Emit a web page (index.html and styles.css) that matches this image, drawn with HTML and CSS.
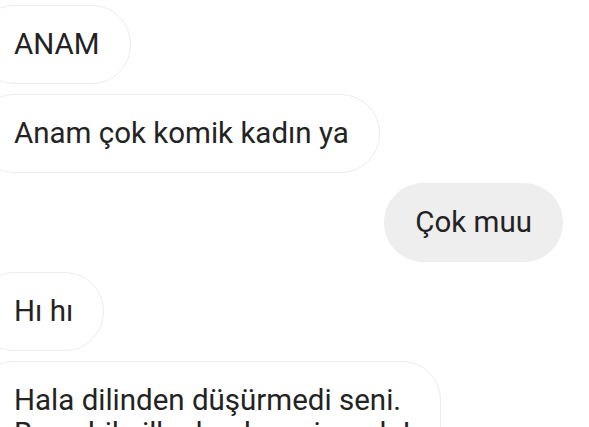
FILE: index.html
```html
<!DOCTYPE html>
<html lang="tr">
<head>
<meta charset="utf-8">
<link rel="stylesheet" href="styles.css">
</head>
<body>
<div class="chat">
  <div class="msg in"><div class="bubble">ANAM</div></div>
  <div class="msg in"><div class="bubble">Anam çok komik kadın ya</div></div>
  <div class="msg out"><div class="bubble">Çok muu</div></div>
  <div class="msg in"><div class="bubble">Hı hı</div></div>
  <div class="msg in"><div class="bubble">Hala dilinden düşürmedi seni.<br>Bana bile ilk olarak seni sordu!</div></div>
</div>
</body>
</html>
```
FILE: styles.css
```css
html, body {
  margin: 0;
  padding: 0;
  background: #ffffff;
  overflow: hidden;
}
.chat {
  display: flex;
  flex-direction: column;
  gap: 10px;
  padding-top: 5px;
  font-family: Roboto, "Noto Sans", sans-serif;
  font-size: 29.5px;
  line-height: 33px;
  color: #232323;
}
.msg {
  display: flex;
}
.msg.out {
  justify-content: flex-end;
  padding-right: 26px;
}
.bubble {
  box-sizing: border-box;
  padding: 22px 30px;
  border-radius: 39px;
  white-space: nowrap;
}
.msg.in .bubble {
  margin-left: -25px;
  padding-left: 38px;
  background: #ffffff;
  border: 1px solid #ededed;
}
.msg.out .bubble {
  background: #eeeeee;
  border: 1px solid #eeeeee;
}
```
